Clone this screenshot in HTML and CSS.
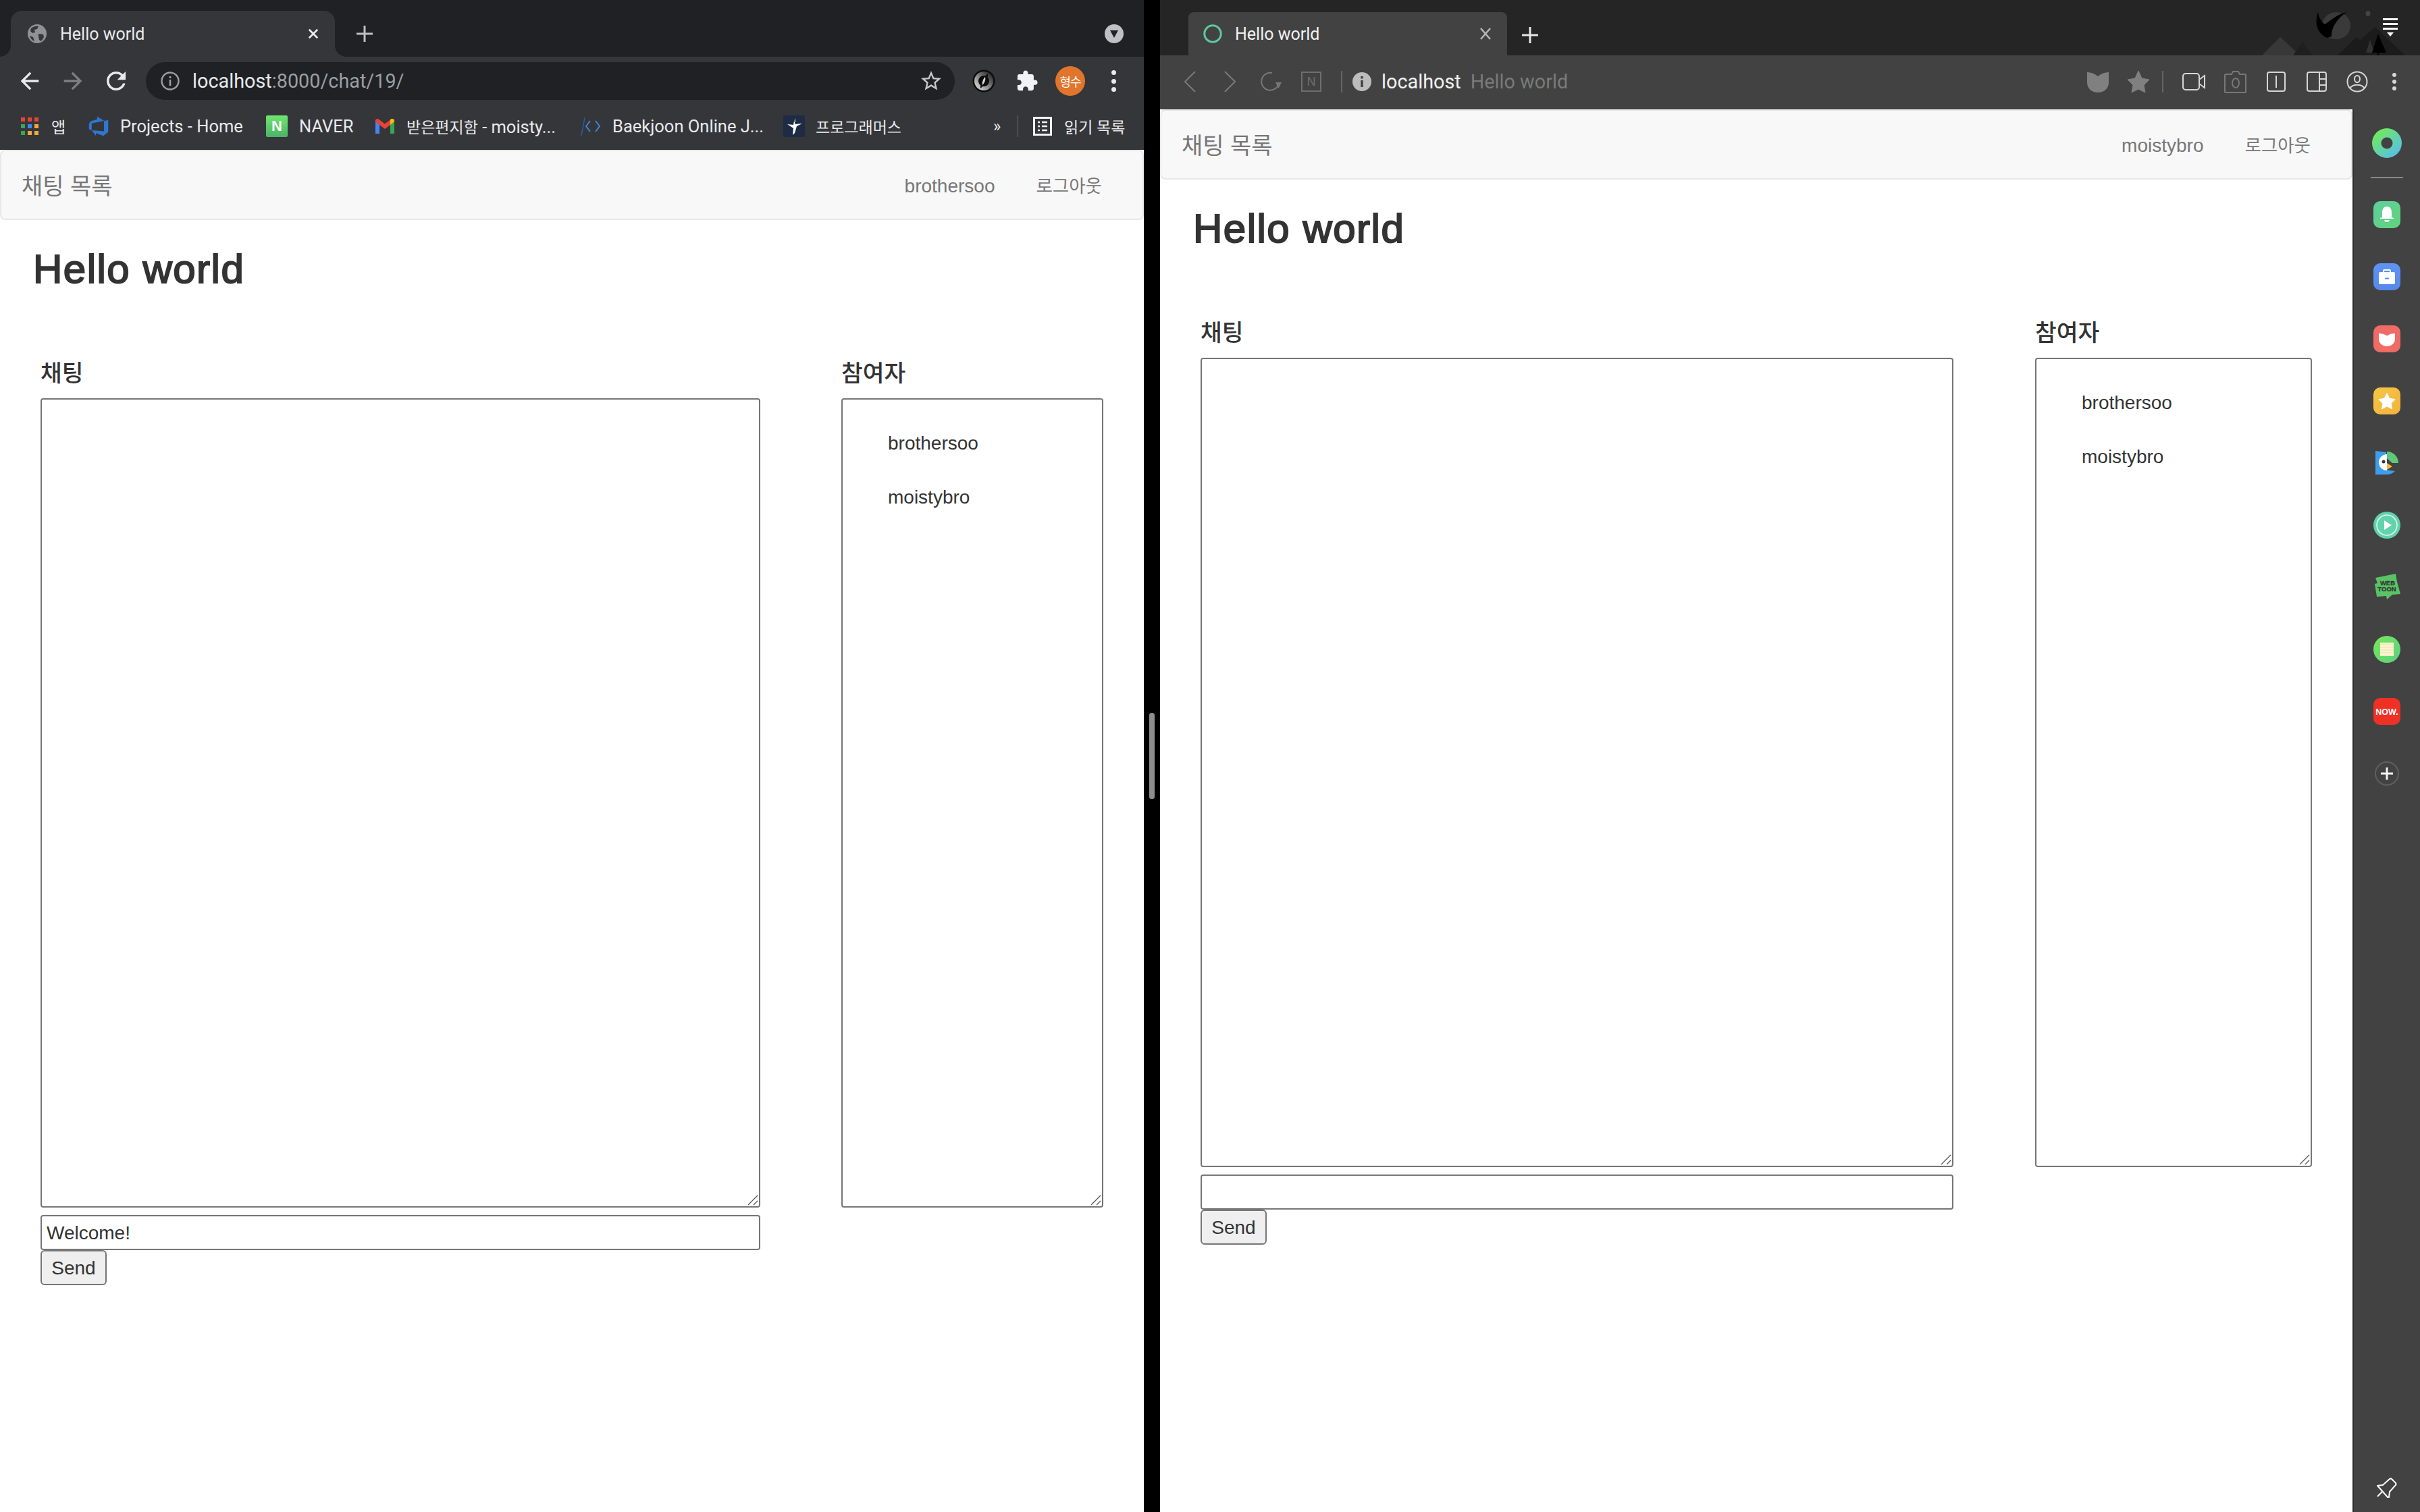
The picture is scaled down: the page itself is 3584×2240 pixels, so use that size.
FILE: index.html
```html
<!DOCTYPE html>
<html lang="ko">
<head>
<meta charset="utf-8">
<title>Hello world</title>
<link rel="stylesheet" href="styles.css">
</head>
<body>
<div class="desktop">

<section class="win win-left">
  <div class="ch-tabs">
    <div class="ch-tab">
      <svg class="ic28" viewBox="0 0 28 28"><circle cx="14" cy="14" r="14" fill="#8e9195"/><path d="M5 6c3-3 8-4 11-3l-2 4-4 1 1 4-4 1-3-3zM16 14l7 1 1 4-4 6-3-2-1-5zM3 17l5 2 2 6c-3-1-6-4-7-8z" fill="#35363a"/></svg>
      <span class="tab-title">Hello world</span>
      <svg class="tab-x" viewBox="0 0 18 18"><path d="M2 2l14 14M16 2L2 16" stroke="#e8eaed" stroke-width="3" fill="none"/></svg>
    </div>
    <svg class="ch-plus" viewBox="0 0 24 24"><path d="M12 0v24M0 12h24" stroke="#bdc1c6" stroke-width="3" fill="none"/></svg>
    <svg class="ch-down" viewBox="0 0 28 28"><circle cx="14" cy="14" r="14" fill="#bdc1c6"/><path d="M8 9h12l-6 11z" fill="#202124"/></svg>
  </div>

  <div class="ch-toolbar">
    <button class="ch-btn"><svg class="ic40" viewBox="0 0 24 24"><path fill="#e8eaed" d="M20 11H7.83l5.59-5.59L12 4l-8 8 8 8 1.41-1.41L7.83 13H20v-2z"/></svg></button>
    <button class="ch-btn"><svg class="ic40" viewBox="0 0 24 24"><path fill="#7c7f83" d="M4 11h12.17l-5.59-5.59L12 4l8 8-8 8-1.41-1.41L16.17 13H4v-2z"/></svg></button>
    <button class="ch-btn"><svg class="ic42" viewBox="0 0 24 24"><path fill="#e8eaed" d="M17.65 6.35C16.2 4.9 14.21 4 12 4c-4.42 0-7.99 3.58-7.99 8s3.57 8 7.99 8c3.73 0 6.84-2.55 7.73-6h-2.08c-.82 2.33-3.04 4-5.65 4-3.31 0-6-2.69-6-6s2.69-6 6-6c1.66 0 3.14.69 4.22 1.78L13 11h7V4l-2.35 2.35z"/></svg></button>
    <div class="omni">
      <svg class="ic28" viewBox="0 0 28 28"><circle cx="14" cy="14" r="12.5" fill="none" stroke="#9aa0a6" stroke-width="2.4"/><path d="M14 12v9M14 7v3" stroke="#9aa0a6" stroke-width="2.6" fill="none"/></svg>
      <span class="url"><span class="url-host">localhost</span><span class="url-rest">:8000/chat/19/</span></span>
      <svg class="omni-star" viewBox="0 0 24 24"><path fill="#c4c7cb" d="M22 9.24l-7.19-.62L12 2 9.19 8.63 2 9.24l5.46 4.73L5.82 21 12 17.27 18.18 21l-1.63-7.03L22 9.24zM12 15.4l-3.76 2.27 1-4.28-3.32-2.88 4.38-.38L12 6.1l1.71 4.04 4.38.38-3.32 2.88 1 4.28L12 15.4z"/></svg>
    </div>
    <div class="ch-ext">
      <button class="ch-btn"><svg class="ic34" viewBox="0 0 34 34"><defs><linearGradient id="extg" x1="0.100" y1="0.900" x2="0.900" y2="0.100"><stop offset="0" stop-color="#c8c8c8"/><stop offset="1" stop-color="#3a3a3a"/></linearGradient></defs><circle cx="17" cy="17" r="16.500" fill="#0c0c0c"/><circle cx="17" cy="17" r="11" fill="none" stroke="url(#extg)" stroke-width="6"/><path d="M23 6c1 6-4 17-11 22-1-6 4-17 11-22z" fill="#0f0f0f"/><path d="M19 11c-3 3-5 8-4 12 3-3 5-8 4-12z" fill="#dcdcdc"/></svg></button>
      <button class="ch-btn"><svg class="ic34" viewBox="0 0 24 24"><path fill="#f1f3f4" d="M20.5 11H19V7c0-1.1-.9-2-2-2h-4V3.5C13 2.12 11.88 1 10.5 1S8 2.12 8 3.5V5H4c-1.1 0-1.99.9-1.99 2v3.8H3.5c1.49 0 2.7 1.21 2.7 2.7s-1.21 2.7-2.7 2.7H2V20c0 1.1.9 2 2 2h3.8v-1.5c0-1.49 1.21-2.7 2.7-2.7 1.49 0 2.7 1.21 2.7 2.7V22H17c1.1 0 2-.9 2-2v-4h1.5c1.38 0 2.5-1.12 2.5-2.5S21.88 11 20.5 11z"/></svg></button>
      <button class="ch-btn"><span class="avatar">형수</span></button>
      <button class="ch-btn"><span class="dots dots-ch"><i></i><i></i><i></i></span></button>
    </div>
  </div>

  <div class="ch-bookmarks">
    <div class="bm bm-apps">
      <span class="apps"><i class="r"></i><i class="r"></i><i class="r"></i><i class="g"></i><i class="b"></i><i class="y"></i><i class="g"></i><i class="y"></i><i class="y"></i></span>
      <span class="ko">앱</span>
    </div>
    <div class="bm bm-projects">
      <svg class="ic32" viewBox="0 0 18 18"><path fill="#2f76d2" d="M17 4v9.74l-4 3.28-6.2-2.26V17L3.29 12.41l10.23.8V4.44zm-3.41.49L7.85 1v2.29L2.58 4.84 1 6.87v4.61l2.26 1V6.57z"/></svg>
      <span>Projects - Home</span>
    </div>
    <div class="bm bm-naver">
      <span class="naver">N</span>
      <span>NAVER</span>
    </div>
    <div class="bm bm-mail">
      <svg class="gmail" viewBox="0 0 28 22"><path d="M0 3v19h6V9z" fill="#4285f4"/><path d="M22 9v13h6V3z" fill="#34a853"/><path d="M0 2.500C0 .5 3 -.8 5 .7L14 7.500 23 .7c2-1.500 5-.2 5 1.800V4l-6 5-8 6-8-6-6-5z" fill="#ea4335"/><path d="M22 9V1c3-2 6-.5 6 2v1z" fill="#fbbc04"/></svg>
      <span><span class="ko">받은편지함</span> - moisty...</span>
    </div>
    <div class="bm bm-boj">
      <svg class="ic32" viewBox="0 0 32 32"><path d="M2 30L7 3" stroke="#2a5a96" stroke-width="1.600" fill="none"/><path d="M15 8L9 16l6 8M23 8l6 8-6 8" stroke="#3f87d6" stroke-width="2" fill="none"/></svg>
      <span>Baekjoon Online J...</span>
    </div>
    <div class="bm bm-prog">
      <svg class="ic32" viewBox="0 0 32 32"><rect width="32" height="32" rx="3" fill="#1e2b44"/><path d="M6 13l9 1 1-6 2 5 10-1-8 4-3 10-3 3 1-10z" fill="#fff"/><path d="M16 8l2-4 1 6z" fill="#7a8598"/></svg>
      <span class="ko">프로그래머스</span>
    </div>
    <span class="bm-more">»</span>
    <span class="bm-sep"></span>
    <div class="bm bm-read">
      <svg class="ic28" viewBox="0 0 28 28"><path d="M1.500 1.500h25v25h-25z" fill="none" stroke="#f1f3f4" stroke-width="3"/><path d="M7 8h3M13 8h8M7 14h3M13 14h8M7 20h3M13 20h8" stroke="#f1f3f4" stroke-width="2.500"/></svg>
      <span class="ko">읽기 목록</span>
    </div>
  </div>

  <main class="page">
    <nav class="navbar">
      <a class="brand">채팅 목록</a>
      <div class="nav-links"><a>brothersoo</a><a class="nav-ko">로그아웃</a></div>
    </nav>
    <h2 class="title">Hello world</h2>
    <div class="chat-row chat-row-left">
      <div class="chat-col">
        <h4 class="sect">채팅</h4>
        <div class="boxwrap">
          <textarea class="log"></textarea>
          <svg class="grip" viewBox="0 0 16 16"><path d="M1 15L15 1M9 15l6-6" stroke="#555" stroke-width="1.300" fill="none"/></svg>
        </div>
        <input class="msg" type="text" value="Welcome!">
        <button class="send">Send</button>
      </div>
      <div class="people-col">
        <h4 class="sect">참여자</h4>
        <div class="boxwrap">
          <div class="people"><ul><li>brothersoo</li><li>moistybro</li></ul></div>
          <svg class="grip" viewBox="0 0 16 16"><path d="M1 15L15 1M9 15l6-6" stroke="#555" stroke-width="1.300" fill="none"/></svg>
        </div>
      </div>
    </div>
  </main>
</section>

<div class="divider"><span class="handle"></span></div>

<section class="win win-right">
  <div class="wh-tabs">
    <div class="wh-tab">
      <svg class="ic28" viewBox="0 0 28 28"><circle cx="14" cy="14" r="12.200" fill="none" stroke="#5cc9a0" stroke-width="3"/></svg>
      <span class="tab-title">Hello world</span>
      <svg class="tab-x" viewBox="0 0 18 18"><path d="M2 1l14 16M16 1L2 17" stroke="#b4b4b4" stroke-width="2.600" fill="none"/></svg>
    </div>
    <svg class="wh-plus" viewBox="0 0 24 24"><path d="M12 0v24M0 12h24" stroke="#e6e6e6" stroke-width="3" fill="none"/></svg>
    <svg class="wh-scene" viewBox="3340 0 230 82">
      <path d="M3350 82l27-27 29 27z" fill="#383838"/>
      <path d="M3396 82l14-20 15 20z" fill="#1f1f1f"/>
      <path d="M3462 82l28-27 5 4 23-19 44 42z" fill="#1b1b1b"/>
      <path d="M3504 78l6-19 6 19z" fill="#333"/>
      <ellipse cx="3507" cy="20" rx="3.500" ry="4" fill="#444"/>
      <ellipse cx="3460" cy="38" rx="21" ry="20" fill="#3a3a3a"/>
      <path d="M3433 18C3428 32 3430 48 3446 56L3453 54C3452 42 3462 26 3476 18 3462 20 3450 32 3443 36 3438 32 3434 26 3433 18z" fill="#000"/>
      <path d="M3522 50l12 28h-11v4h-2v-4h-8z" fill="#000"/>
    </svg>
    <div class="wh-menu"><i></i><i></i><i></i><b></b></div>
  </div>

  <div class="wh-toolbar">
    <button class="wh-btn"><svg class="ic32h" viewBox="0 0 20 32"><path d="M18 1L3 16l15 15" fill="none" stroke="#7a7a7a" stroke-width="2"/></svg></button>
    <button class="wh-btn"><svg class="ic32h" viewBox="0 0 20 32"><path d="M2 1l15 15L2 31" fill="none" stroke="#7a7a7a" stroke-width="2"/></svg></button>
    <button class="wh-btn"><svg class="ic32" viewBox="0 0 32 32"><path d="M28 18A13 13 0 1 1 18 3" fill="none" stroke="#777" stroke-width="2"/><path d="M23 17h9l-4.500 9z" fill="#777"/></svg></button>
    <button class="wh-btn"><span class="nbox">N</span></button>
    <span class="wh-sep wh-sep-a"></span>
    <svg class="ic28" viewBox="0 0 28 28"><circle cx="14" cy="14" r="14" fill="#bdbdbd"/><path d="M14 12v10M14 6v3.500" stroke="#424242" stroke-width="3.500" fill="none"/></svg>
    <span class="wh-url"><span class="wh-host">localhost</span><span class="wh-title">Hello world</span></span>
    <div class="wh-actions">
      <button class="wh-btn"><svg class="ic34" viewBox="0 0 34 34"><path d="M1 3c6 0 11 2 16 6 5-4 10-6 16-6v15c0 9-7 15-16 15S1 27 1 18z" fill="#808080"/></svg></button>
      <button class="wh-btn"><svg class="ic34" viewBox="0 0 34 34"><path d="M17 1l5 11 11 2-8 8 2 11-10-5-10 5 2-11-8-8 11-2z" fill="#808080" stroke="#808080" stroke-linejoin="round"/></svg></button>
      <span class="wh-sep wh-sep-b"></span>
      <button class="wh-btn"><svg class="ic36" viewBox="0 0 36 36"><rect x="2" y="6" width="24" height="24" rx="4" fill="none" stroke="#d6d6d6" stroke-width="2"/><path d="M26 15l8-6v18l-8-6" fill="none" stroke="#d6d6d6" stroke-width="2"/></svg></button>
      <button class="wh-btn wh-cam"><svg class="ic36" viewBox="0 0 36 36"><path d="M4 7h8l2-4h8l2 4h8a1 1 0 0 1 1 1v25a1 1 0 0 1-1 1H3a1 1 0 0 1-1-1V8z" fill="none" stroke="#777" stroke-width="2"/><ellipse cx="18" cy="20" rx="5" ry="7" fill="none" stroke="#777" stroke-width="2"/></svg></button>
      <button class="wh-btn"><svg class="ic32" viewBox="0 0 32 32"><rect x="3" y="2" width="26" height="28" rx="3" fill="none" stroke="#d6d6d6" stroke-width="2"/><path d="M16 7v18" stroke="#d6d6d6" stroke-width="2"/></svg></button>
      <button class="wh-btn"><svg class="ic32" viewBox="0 0 32 32"><rect x="2" y="2" width="28" height="28" rx="3" fill="none" stroke="#d6d6d6" stroke-width="2"/><path d="M20 2v28M20 12h10M20 21h10" stroke="#d6d6d6" stroke-width="2"/></svg></button>
      <button class="wh-btn"><svg class="ic32" viewBox="0 0 32 32"><circle cx="16" cy="16" r="14.500" fill="none" stroke="#d6d6d6" stroke-width="2"/><ellipse cx="16" cy="12" rx="4" ry="5" fill="none" stroke="#d6d6d6" stroke-width="2"/><path d="M5 26c4-7 18-7 22 0" fill="none" stroke="#d6d6d6" stroke-width="2"/></svg></button>
      <span class="dots dots-wh"><i></i><i></i><i></i></span>
    </div>
  </div>

  <div class="wh-body">
    <main class="page">
      <nav class="navbar">
        <a class="brand">채팅 목록</a>
        <div class="nav-links"><a>moistybro</a><a class="nav-ko">로그아웃</a></div>
      </nav>
      <h2 class="title">Hello world</h2>
      <div class="chat-row chat-row-right">
        <div class="chat-col">
          <h4 class="sect">채팅</h4>
          <div class="boxwrap">
            <textarea class="log"></textarea>
            <svg class="grip" viewBox="0 0 16 16"><path d="M1 15L15 1M9 15l6-6" stroke="#555" stroke-width="1.300" fill="none"/></svg>
          </div>
          <input class="msg" type="text" value="">
          <button class="send">Send</button>
        </div>
        <div class="people-col">
          <h4 class="sect">참여자</h4>
          <div class="boxwrap">
            <div class="people"><ul><li>brothersoo</li><li>moistybro</li></ul></div>
            <svg class="grip" viewBox="0 0 16 16"><path d="M1 15L15 1M9 15l6-6" stroke="#555" stroke-width="1.300" fill="none"/></svg>
          </div>
        </div>
      </div>
    </main>

    <aside class="sidebar">
      <svg class="side-ring" viewBox="0 0 44 44"><defs><linearGradient id="ringg" x1="0.150" y1="0.100" x2="0.850" y2="0.900"><stop offset="0" stop-color="#72ea5a"/><stop offset="1" stop-color="#58bfe8"/></linearGradient></defs><circle cx="22" cy="22" r="22" fill="url(#ringg)"/><circle cx="22" cy="22" r="8.500" fill="#424242"/></svg>
      <span class="side-sep"></span>
      <span class="tile t-bell"><svg class="ic40" viewBox="0 0 40 40"><path d="M20 8c-5.500 0-7 4.500-7 9v7l-3 1v1h20v-1l-3-1v-7c0-4.500-1.500-9-7-9zM16 28h8l-2 3h-4z" fill="#fff"/></svg></span>
      <span class="tile t-case"><svg class="ic40" viewBox="0 0 40 40"><rect x="8" y="13" width="24" height="18" rx="2" fill="#fff"/><rect x="15" y="10" width="10" height="5" rx="1" fill="none" stroke="#fff" stroke-width="2"/><rect x="17" y="21.500" width="6" height="2" fill="#5b8ff0"/></svg></span>
      <span class="tile t-pocket"><svg class="ic40" viewBox="0 0 40 40"><path d="M8 12c4 0 9 1 12 3.500C23 13 28 12 32 12v8c0 7-6 11-12 11S8 27 8 20z" fill="#fff"/></svg></span>
      <span class="tile t-star"><svg class="ic40" viewBox="0 0 40 40"><path d="M20 9l3.600 7.500 8 1.200-5.800 5.700 1.400 8-7.200-3.800-7.200 3.800 1.400-8-5.800-5.700 8-1.200z" fill="#fff" stroke="#fff" stroke-width="1.500" stroke-linejoin="round"/></svg></span>
      <svg class="ic40 side-item" viewBox="-3 -2 40 40"><path d="M0 0l16 2v33H0zM16 28l13 2q-5 5-13 5z" fill="#3f9dee"/><path d="M17 1c9 0 17 7 17 17h-9l-8-7z" fill="#5fc97a"/><path d="M17 5a11 11 0 0 0 0 24z" fill="#fff"/><circle cx="12" cy="16" r="2.500" fill="#33364a"/><path d="M17 18l8 5-8 5z" fill="#f5b83d"/></svg>
      <span class="tile t-play"><svg class="ic40" viewBox="0 0 40 40"><circle cx="20" cy="20" r="15" fill="none" stroke="#e6f7f0" stroke-width="1.500"/><path d="M16 13l11 7-11 7z" fill="#fff"/></svg></span>
      <svg class="ic40 side-item" viewBox="0 0 40 40"><path d="M3 6l30-6 2 12 5 18-12 1-8 7-1-5-14 1-3-19 4-1z" fill="#5bc266"/><text class="wt" x="21" y="17" text-anchor="middle">WEB</text><text class="wt" x="20" y="26" text-anchor="middle">TOON</text></svg>
      <span class="tile t-note"><span class="note-sheet"></span></span>
      <span class="tile t-now"><svg class="ic40" viewBox="0 0 40 40"><text class="nowt" x="20" y="25" text-anchor="middle">NOW.</text></svg></span>
      <svg class="side-add" viewBox="0 0 36 36"><circle cx="18" cy="18" r="17" fill="none" stroke="#5f5f5f" stroke-width="2"/><path d="M18 9v18M9 18h18" stroke="#f4f4f4" stroke-width="3"/></svg>
      <svg class="side-pin" viewBox="0 0 30 30"><path d="M1 28L9 20M1 12l8-1 10-9q2-1 3 0l6 6q1 2 0 3l-9 10-1 8q-1 1-2 0z" fill="none" stroke="#fff" stroke-width="2"/></svg>
    </aside>
  </div>
</section>
</div>
</body>
</html>
```
FILE: styles.css
```css
* { box-sizing: border-box; }
html, body { margin: 0; padding: 0; }
body { width: 3584px; height: 2240px; overflow: hidden; background: #000; color: #333; font-family: "Liberation Sans", "Noto Sans CJK KR", sans-serif; }
button { background: none; border: 0; padding: 0; margin: 0; display: flex; align-items: center; justify-content: center; }
svg { display: block; flex: none; }

.desktop { display: flex; height: 2240px; }
.win { display: flex; flex-direction: column; height: 100%; }
.win-left { width: 1694px; background: #35363a; }
.win-right { flex: 1; min-width: 0; background: #424242; }
.divider { width: 24px; background: #000; display: flex; align-items: center; justify-content: center; }
.handle { width: 8px; height: 128px; border-radius: 4px; background: #8e8e8e; }

.ic28 { width: 28px; height: 28px; }
.ic32 { width: 32px; height: 32px; }
.ic32h { width: 20px; height: 32px; }
.ic34 { width: 34px; height: 34px; }
.ic36 { width: 36px; height: 36px; }
.ic40 { width: 40px; height: 40px; }
.ic42 { width: 42px; height: 42px; }

/* Chrome window */
.ch-tabs { height: 84px; background: #202124; padding: 16px 30px 0 16px; display: flex; }
.ch-tab { position: relative; width: 480px; height: 68px; background: #35363a; border-radius: 16px 16px 0 0; display: flex; align-items: center; padding: 0 24px 0 25px; }
.ch-tab::before, .ch-tab::after { content: ""; position: absolute; bottom: 0; width: 16px; height: 16px; }
.ch-tab::before { left: -16px; background: radial-gradient(circle at 0 0, #202124 15.5px, #35363a 16px); }
.ch-tab::after { right: -16px; background: radial-gradient(circle at 100% 0, #202124 15.5px, #35363a 16px); }
.tab-title { font: 25px "Roboto", sans-serif; color: #e8eaed; margin-left: 20px; flex: 1; white-space: nowrap; }
.tab-x { width: 16px; height: 16px; }
.ch-plus { width: 24px; height: 24px; margin: 22px 0 0 32px; }
.ch-down { width: 28px; height: 28px; margin: 20px 0 0 auto; }

.ch-toolbar { height: 56px; margin-top: 8px; padding-left: 12px; display: flex; align-items: center; }
.ch-btn { width: 64px; height: 56px; }
.omni { width: 1198px; height: 56px; margin-left: 12px; border-radius: 28px; background: #202124; display: flex; align-items: center; padding: 0 17px 0 22px; }
.url { font: 28.8px "Roboto", sans-serif; margin-left: 19px; white-space: nowrap; flex: 1; }
.url-host { color: #e8eaed; }
.url-rest { color: #9aa0a6; }
.omni-star { width: 36px; height: 36px; }
.ch-ext { display: flex; margin-left: 11px; }
.avatar { width: 44px; height: 44px; border-radius: 50%; background: #e0752c; color: #fff; font: 18px "Noto Sans CJK KR", sans-serif; display: flex; align-items: center; justify-content: center; letter-spacing: -1px; }
.dots { display: flex; flex-direction: column; align-items: center; }
.dots i { display: block; width: 7px; height: 7px; border-radius: 50%; }
.dots-ch { gap: 5.500px; }
.dots-ch i { background: #e8eaed; }

.ch-bookmarks { height: 72px; display: flex; align-items: center; padding: 6px 0 0 31px; font: 25.500px "Roboto", "Noto Sans CJK KR", sans-serif; color: #e8eaed; }
.ko { font-size: 23px; }
.bm { display: flex; align-items: center; white-space: nowrap; flex: none; }
.bm-apps { width: 99px; gap: 19px; }
.bm-projects { width: 264px; gap: 16px; }
.bm-naver { width: 162px; gap: 17px; }
.bm-mail { width: 303px; gap: 18px; }
.bm-boj { width: 301px; gap: 16px; }
.bm-prog { width: 311px; gap: 16px; }
.apps { display: grid; grid-template-columns: repeat(3, 6px); gap: 4px; width: 26px; }
.apps i { display: block; height: 6px; width: 6px; }
.apps .r { background: #ea4335; }
.apps .g { background: #34a853; }
.apps .b { background: #4285f4; }
.apps .y { background: #f4a83a; }
.naver { width: 32px; height: 32px; border-radius: 2px; background: linear-gradient(#6ee76f, #4cb268); color: #fff; font: bold 22px "Liberation Sans", sans-serif; display: flex; align-items: center; justify-content: center; }
.gmail { width: 28px; height: 22px; }
.bm-more { font-size: 24px; width: 36px; }
.bm-sep { width: 1px; height: 32px; background: #6a6c70; }
.bm-read { margin-left: 22px; gap: 18px; }

/* Page */
.page { flex: 1; min-width: 0; margin-top: 2px; background: #fff; }
.navbar { height: 104px; background: #f8f8f8; border: 2px solid #e7e7e7; border-radius: 8px; display: flex; align-items: center; padding: 0 60px 2px 30px; color: #777; font-size: 28px; }
.brand { font-size: 34px; }
.nav-links { margin-left: auto; display: flex; align-items: baseline; gap: 61px; }
.nav-ko { font-size: 26.500px; }
.title { margin: 40px 0 0 49px; font-size: 60px; line-height: 66px; font-weight: 400; -webkit-text-stroke: 2px #333; letter-spacing: 1.500px; color: #333; }
.chat-row { display: flex; padding-left: 60px; margin-top: 98px; }
.chat-row-left .chat-col { width: 1066px; }
.chat-row-left .people-col { width: 388px; margin-left: 120px; }
.chat-row-right .chat-col { width: 1115px; }
.chat-row-right .people-col { width: 410px; margin-left: 121px; }
.sect { margin: 0 0 14px; font-size: 34.500px; line-height: 46px; font-weight: 500; color: #333; }
.boxwrap { position: relative; }
.grip { position: absolute; right: 3px; bottom: 3px; width: 16px; height: 16px; }
.log { display: block; width: 100%; height: 1199px; border: 2px solid #767676; border-radius: 4px; background: #fff; padding: 4px; margin: 0; resize: none; }
.msg { display: block; width: 100%; height: 52px; margin: 11px 0 0; border: 2px solid #767676; border-radius: 4px; padding: 2px 7px 0; font: 28px "Liberation Sans", sans-serif; color: #333; background: #fff; }
.send { width: 98px; height: 52px; border: 2px solid #767676; border-radius: 6px; background: #efefef; font: 28px "Liberation Sans", sans-serif; color: #333; padding-top: 2px; }
.people { height: 1199px; border: 2px solid #767676; border-radius: 4px; }
.people ul { list-style: none; margin: 0; padding: 45px 0 0 67px; }
.people li { font-size: 28px; line-height: 40px; margin-bottom: 40px; color: #333; }

/* Whale window */
.wh-tabs { position: relative; height: 82px; background: #262526; padding: 18px 0 0 42px; display: flex; }
.wh-tab { width: 472px; height: 64px; background: #424242; border-radius: 8px 8px 0 0; display: flex; align-items: center; padding: 0 23px 0 22px; }
.wh-tab .tab-x { width: 18px; height: 18px; }
.wh-tab .tab-title { margin-left: 19px; color: #f1f1f1; }
.wh-plus { width: 24px; height: 24px; margin: 22px 0 0 22px; }
.wh-scene { position: absolute; left: 1622px; top: 0; width: 230px; height: 82px; }
.wh-menu { position: absolute; left: 1811px; top: 27px; width: 22px; }
.wh-menu i { display: block; height: 2.500px; background: #fff; margin-bottom: 4.500px; }
.wh-menu b { display: block; width: 0; height: 0; margin: 0 auto; border: 5px solid transparent; border-top: 6px solid #fff; border-bottom: 0; }

.wh-toolbar { height: 78px; padding-left: 14px; display: flex; align-items: center; }
.wh-btn { width: 60px; height: 60px; flex: none; }
.wh-cam { margin-left: 2px; }
.nbox { width: 30px; height: 30px; border: 2px solid #6e6e6e; color: #6e6e6e; font: 18px "Liberation Sans", sans-serif; display: flex; align-items: center; justify-content: center; }
.wh-sep { display: block; width: 2px; height: 32px; background: #666; flex: none; }
.wh-sep-a { margin: 0 15px 0 14px; }
.wh-sep-b { margin: 0 15px 0 5px; }
.wh-url { font: 28.800px "Roboto", sans-serif; margin-left: 15px; white-space: nowrap; }
.wh-host { color: #f1f1f1; margin-right: 14px; }
.wh-title { color: #7a7a7a; }
.wh-actions { margin-left: auto; display: flex; align-items: center; padding-right: 8px; }
.dots-wh { gap: 4px; width: 60px; margin-left: -5px; }
.dots-wh i { background: #d6d6d6; width: 6px; height: 6px; }

.wh-body { flex: 1; display: flex; min-height: 0; }
.sidebar { width: 100px; margin-top: 2px; border-left: 2px solid #2e2e2e; background: #424242; display: flex; flex-direction: column; align-items: center; padding-top: 28px; }
.side-ring { width: 44px; height: 44px; }
.side-sep { display: block; width: 48px; height: 2px; background: #888; margin: 28px 0 34px; }
.tile { width: 40px; height: 40px; border-radius: 10px; display: flex; align-items: center; justify-content: center; flex: none; margin-bottom: 52px; }
.t-bell { background: linear-gradient(135deg, #5fcf9f, #60d47a); }
.t-case { background: linear-gradient(#5e94f2, #5688ec); }
.t-pocket { background: #ee6b66; }
.t-star { background: linear-gradient(135deg, #f5c644, #f4b23c); }
.side-item { margin-bottom: 52px; }
.t-play { border-radius: 50%; background: radial-gradient(circle, #62d4ac 60%, #4fb9ba 100%); }
.wt { font: 900 9.500px "Liberation Sans", sans-serif; fill: #2f3a34; stroke: #2f3a34; stroke-width: .3px; }
.t-note { border-radius: 50%; background: linear-gradient(135deg, #78e858, #58d080); }
.note-sheet { width: 20px; height: 20px; background: repeating-linear-gradient(#fbf4cf 0 2px, #f2ebc0 2px 4px); }
.t-now { background: #ee3124; margin-bottom: 54px; }
.nowt { font: 900 12.500px "Liberation Sans", sans-serif; fill: #fff; }
.side-add { width: 36px; height: 36px; }
.side-pin { width: 30px; height: 30px; margin-top: auto; margin-bottom: 21px; }
```
